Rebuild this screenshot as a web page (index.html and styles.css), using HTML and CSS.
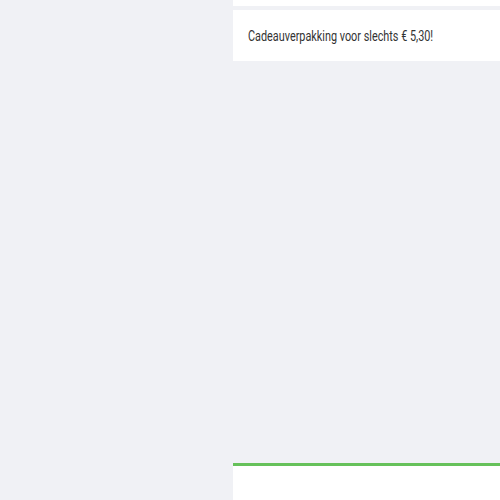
FILE: index.html
```html
<!DOCTYPE html>
<html lang="nl">
<head>
<meta charset="utf-8">
<link rel="stylesheet" href="styles.css">
</head>
<body>
<div class="page">
  <aside class="side"></aside>
  <main class="main">
    <div class="top-card"></div>
    <div class="promo"><span class="promo-text">Cadeauverpakking voor slechts € 5,30!</span></div>
    <div class="spacer"></div>
    <div class="bottom-card"></div>
  </main>
</div>
</body>
</html>
```
FILE: styles.css
```css
html, body {
  margin: 0;
  padding: 0;
  background: #f0f1f5;
}
.page {
  display: flex;
  height: 500px;
  width: 500px;
}
.side {
  width: 233px;
  flex: none;
}
.main {
  flex: 1;
  display: flex;
  flex-direction: column;
  min-width: 0;
}
.top-card {
  height: 6px;
  background: #fff;
}
.promo {
  margin-top: 4px;
  height: 51px;
  box-sizing: border-box;
  background: #fff;
  padding: 0 15px;
  display: flex;
  align-items: center;
  white-space: nowrap;
  font-family: Roboto, sans-serif;
  font-size: 14px;
  color: #333;
}
.promo-text {
  display: inline-block;
  transform: scaleX(0.775);
  transform-origin: left center;
}
.spacer {
  flex: 1;
}
.bottom-card {
  height: 34px;
  background: #fff;
  border-top: 3px solid #66c15a;
}
```
